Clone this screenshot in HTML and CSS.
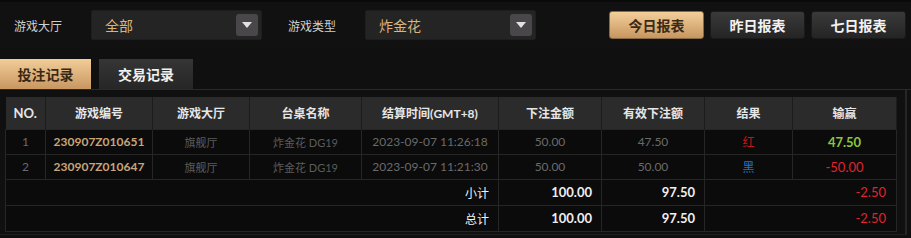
FILE: index.html
```html
<!DOCTYPE html>
<html lang="zh">
<head>
<meta charset="utf-8">
<link rel="stylesheet" href="styles.css">
</head>
<body>
<div class="topbar">
  <span class="label">游戏大厅</span>
  <div class="select"><span class="select-text">全部</span><span class="arrow"><svg width="10" height="6" viewBox="0 0 10 6"><path d="M0 0H10L5 6Z" fill="#e6dfe4"/></svg></span></div>
  <span class="label label2">游戏类型</span>
  <div class="select"><span class="select-text">炸金花</span><span class="arrow"><svg width="10" height="6" viewBox="0 0 10 6"><path d="M0 0H10L5 6Z" fill="#e6dfe4"/></svg></span></div>
  <div class="btns">
    <button class="btn btn-gold">今日报表</button>
    <button class="btn">昨日报表</button>
    <button class="btn">七日报表</button>
  </div>
</div>
<div class="tabs">
  <div class="tab tab-active">投注记录</div>
  <div class="tab">交易记录</div>
</div>
<div class="panel">
  <table class="grid">
    <colgroup>
      <col style="width:40px"><col style="width:107px"><col style="width:97px"><col style="width:112px"><col style="width:137px"><col style="width:103px"><col style="width:103px"><col style="width:88px"><col style="width:104px">
    </colgroup>
    <thead>
      <tr><th>NO.</th><th>游戏编号</th><th>游戏大厅</th><th>台桌名称</th><th>结算时间(GMT+8)</th><th>下注金额</th><th>有效下注额</th><th>结果</th><th>输赢</th></tr>
    </thead>
    <tbody>
      <tr><td>1</td><td class="gid">230907Z010651</td><td class="cn">旗舰厅</td><td class="cn">炸金花 DG19</td><td>2023-09-07 11:26:18</td><td>50.00</td><td>47.50</td><td class="red">红</td><td class="win">47.50</td></tr>
      <tr><td>2</td><td class="gid">230907Z010647</td><td class="cn">旗舰厅</td><td class="cn">炸金花 DG19</td><td>2023-09-07 11:21:30</td><td>50.00</td><td>50.00</td><td class="blue">黑</td><td class="lose">-50.00</td></tr>
      <tr class="sum"><td colspan="5" class="r lbl">小计</td><td class="r">100.00</td><td class="r">97.50</td><td colspan="2" class="r neg">-2.50</td></tr>
      <tr class="sum"><td colspan="5" class="r lbl">总计</td><td class="r">100.00</td><td class="r">97.50</td><td colspan="2" class="r neg">-2.50</td></tr>
    </tbody>
  </table>
</div>
</body>
</html>
```
FILE: styles.css
```css
* { box-sizing: border-box; }
body {
  margin: 0;
  background: #101010;
  font-family: Lato, "Noto Sans CJK SC", sans-serif;
  color: #ddd;
  width: 911px;
  height: 238px;
  overflow: hidden;
}
.topbar {
  display: flex;
  align-items: center;
  height: 47px;
  padding: 1px 5px 0 14px;
  border-top: 2px solid #0a0a0a;
  background: #111;
}
.label {
  font-size: 12px;
  color: #cfcfcf;
  width: 48px;
  margin-right: 29px;
}
.label2 { margin-left: 26px; }
.select {
  width: 171px;
  height: 30px;
  background: #242424;
  border: 1px solid #1e1e1e;
  border-radius: 2px;
  display: flex;
  align-items: center;
  justify-content: space-between;
  padding: 0 3px 0 13px;
}
.select-text {
  font-size: 14px;
  color: #d8b57c;
}
.arrow {
  width: 22px;
  height: 22px;
  background: #4a474a;
  border-radius: 3px;
  display: flex;
  align-items: center;
  justify-content: center;
}
.btns {
  margin-left: auto;
  display: flex;
  gap: 6px;
}
.btn {
  width: 95px;
  height: 28px;
  border: 1px solid #1a1a1a;
  border-radius: 3px;
  background: linear-gradient(#3a3a3a, #242424);
  color: #f2f2f2;
  font-family: "Noto Sans CJK SC", sans-serif;
  font-weight: 700;
  font-size: 14px;
  padding: 0;
}
.btn-gold {
  background: linear-gradient(#f3cf9a, #c79660);
  color: #3b2a17;
  border-color: #8a6a44;
}
.tabs {
  display: flex;
  gap: 8px;
  margin-top: 12px;
  height: 31px;
  border-bottom: 1px solid #2a2a2a;
}
.tab {
  width: 94px;
  height: 30px;
  display: flex;
  align-items: center;
  justify-content: center;
  font-weight: 700;
  font-size: 14px;
  color: #f0f0f0;
  background: linear-gradient(#353535, #262626);
}
.tab-active {
  width: 91px;
  background: linear-gradient(#f2cd98, #c99761);
  color: #3a2814;
}
.panel {
  width: 907px;
  height: 145px;
  border-right: 2px solid #262626;
  border-bottom: 1px solid #202020;
  padding: 7px 0 0 5px;
}
.grid {
  border-collapse: collapse;
  table-layout: fixed;
  width: 891px;
  font-size: 12px;
}
.grid th {
  height: 32px;
  background: #2b2b2b;
  color: #e6e6e6;
  font-weight: 700;
  font-size: 12px;
  border-right: 1px solid #1c1c1c;
  padding: 0;
}
.grid th:first-child { font-size: 13px; }
.grid td {
  height: 25px;
  background: #0b0b0b;
  border: 1px solid #262626;
  color: #6a6a6a;
  text-align: center;
  padding: 0;
  font-size: 12px;
}
.grid td.cn { color: #5c5c5c; font-size: 11px; }
.grid td.gid { color: #c9a47a; font-weight: 700; font-size: 12px; }
.grid td.red { color: #c4161c; }
.grid td.blue { color: #1d72d8; }
.grid td.win { color: #8cc63e; font-weight: 700; font-size: 13px; }
.grid td.lose { color: #e0232d; font-size: 13px; }
.grid tr.sum td {
  color: #efefef;
  font-weight: 700;
  font-size: 13px;
  height: 26px;
}
.grid tr.sum td.lbl { font-weight: 400; font-size: 12px; color: #f2f2f2; }
.grid tr.sum td.r { text-align: right; padding-right: 9px; }
.grid tr.sum td.neg { color: #e0232d; font-weight: 400; padding-right: 10px; }
```
